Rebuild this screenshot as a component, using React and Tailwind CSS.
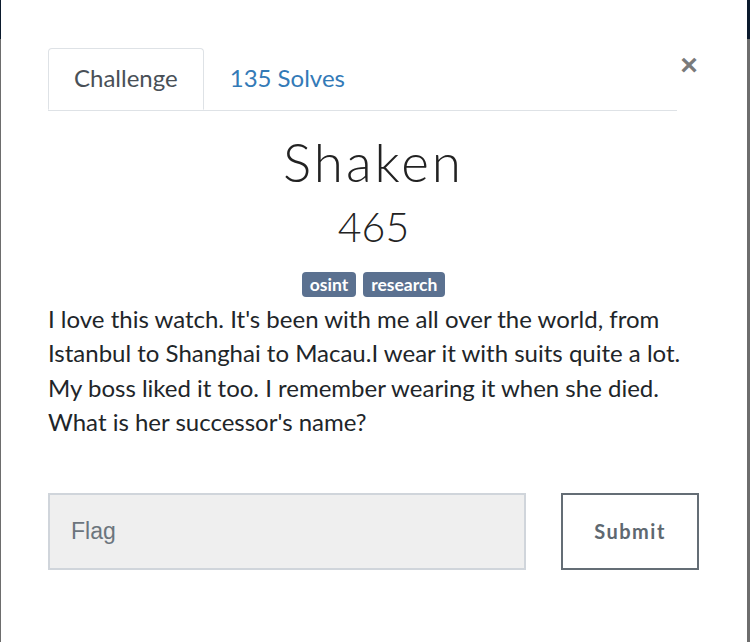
import React from 'react';

const App = () => {
  return (
    <div className="relative w-[750px] h-[642px] overflow-hidden bg-[#6d6d6d]">
      {/* page behind the modal */}
      <div className="h-[39px] bg-[#0b1a2d]"></div>

      {/* Modal */}
      <div className="absolute top-0 left-[1px] w-[746px] h-[642px] bg-white pl-[47px] pr-[48px] pt-[48px] font-['Lato','Noto_Sans',sans-serif]">
        {/* Tabs + close */}
        <div className="flex items-start">
          <div className="flex flex-1 border-b border-[#dee2e6]">
            <div className="-mb-px h-[62px] pb-[2px] px-[25px] flex items-center border border-b-white border-[#dee2e6] rounded-t-[4px] bg-white text-[24px] text-[#495057]">
              Challenge
            </div>
            <div className="h-[62px] pb-[2px] px-[26px] flex items-center text-[24px] text-[#337ab7]">
              135 Solves
            </div>
          </div>
          <button className="w-[20px] ml-[2px] mt-[2px] text-[30px] leading-[30px] font-bold text-[#7a7a7a] font-['Liberation_Sans',sans-serif]">
            ×
          </button>
        </div>

        {/* Title */}
        <div className="flex flex-col items-center">
          <h2 className="mt-[23px] text-[53px] leading-[56px] font-light tracking-[3px] text-[#222] font-['Lato',sans-serif]">
            Shaken
          </h2>
          <h3 className="mt-[9px] text-[41px] leading-[56px] font-light text-[#222]">
            465
          </h3>
          <div className="mt-[17px] flex gap-[7px]">
            <span className="px-[8px] h-[25px] leading-[25px] rounded-[4px] bg-[#5b7190] text-white text-[17.5px] font-bold">
              osint
            </span>
            <span className="px-[8px] h-[25px] leading-[25px] rounded-[4px] bg-[#5b7190] text-white text-[17.5px] font-bold">
              research
            </span>
          </div>
        </div>

        {/* Description */}
        <p className="mt-[5px] text-[24px] leading-[34.4px] text-[#212529]">
          I love this watch. It's been with me all over the world, from Istanbul to Shanghai to Macau.I wear it with suits quite a lot. My boss liked it too. I remember wearing it when she died. What is her successor's name?
        </p>

        {/* Flag form */}
        <div className="mt-[53px] flex items-center">
          <input
            placeholder="Flag"
            className="w-[478px] h-[77px] px-[21px] bg-[#efefef] border-2 border-[#d0d5db] text-[23px] text-[#495057] placeholder:text-[#6c757d] font-['Liberation_Sans',sans-serif] outline-none"
          />
          <button className="ml-auto w-[138px] h-[77px] border-2 border-[#646d75] bg-white text-[20px] font-bold tracking-[1.5px] text-[#5e6870]">
            Submit
          </button>
        </div>
      </div>
    </div>
  );
};

export default App;
